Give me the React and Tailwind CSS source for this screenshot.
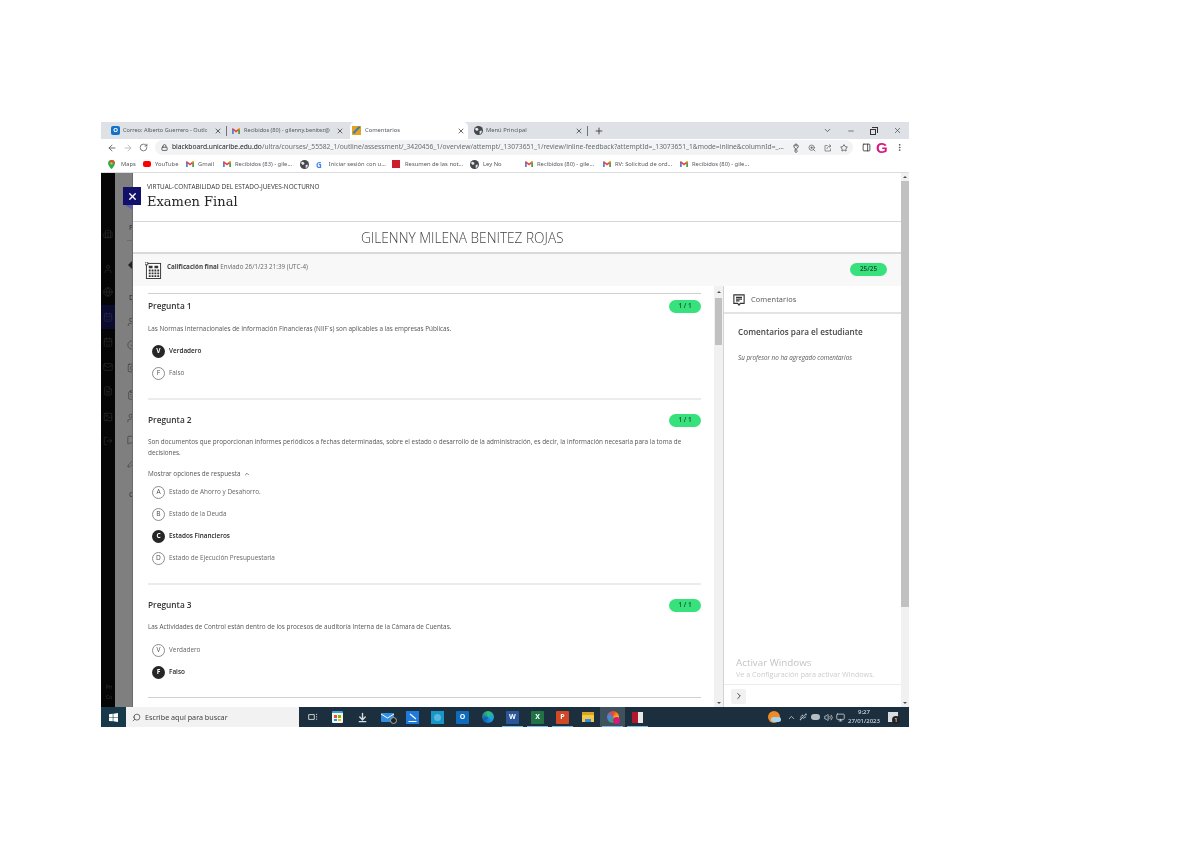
import React from "react";
import { ArrowLeft, ArrowRight, RotateCw, Lock, KeyRound, ZoomIn, Star, PanelRight, MoreVertical, X, Plus, ChevronDown, Minus, Search, ChevronRight, ChevronUp, Volume2, Monitor, Usb, ArrowDownToLine, User, Building2, Globe as LGlobe, CalendarDays, Mail, FileText, Image, LogOut, UserSearch, CircleCheck, SquarePlay, ClipboardList, UserCog, MessageSquare, Pencil } from "lucide-react";

const ui = "font-['Noto_Sans','Open_Sans',sans-serif]";
const os = "font-['Open_Sans','Noto_Sans',sans-serif]";

const GM = () => (
  <svg viewBox="0 0 16 12" className="w-[8px] h-[6px] shrink-0">
    <path d="M0 2v10h3V5l5 4 5-4v7h3V2l-1.500-2L8 5 1.500 0z" fill="#ea4335" />
    <path d="M0 2v10h3V5z" fill="#4285f4" />
    <path d="M13 5v7h3V2z" fill="#34a853" />
    <path d="M13 5l3-3-1.500-2L13 1z" fill="#fbbc04" />
  </svg>
);
const Globe = () => (
  <svg viewBox="0 0 16 16" className="w-[9px] h-[9px] shrink-0">
    <circle cx="8" cy="8" r="8" fill="#44484c" />
    <path d="M3 3l4 1 1 3-3 2-3-3zM10 9l4-1-1 5-3 1z" fill="#e8eaed" />
  </svg>
);
const Tab = ({ w, cls, ts, icon, label, active }) => (
  <div className={`${w} ${cls} h-full flex items-center gap-[3px] shrink-0 ${active ? "bg-white rounded-t-[5px]" : ""}`}>
    {icon}
    <span className={`flex-1 whitespace-nowrap ${ts} text-[#55585c]`}>{label}</span>
    <X size={8} strokeWidth={2.2} className="text-[#333] shrink-0" />
  </div>
);
const Bm = ({ w, icon, label }) => (
  <div className={`${w} flex items-center gap-[4px] shrink-0`}>
    {icon}
    {label && <span className="whitespace-nowrap text-[5.8px] text-[#55585c]">{label}</span>}
  </div>
);

const Badge = ({ children, w = "w-[32px]" }) => (
  <div className={`${w} h-[13px] rounded-full bg-[#37e27c] flex items-center justify-center text-[6.4px] font-semibold text-[#164a2e] shrink-0`}>{children}</div>
);
const Opt = ({ l, t, sel }) => (
  <div className="h-[22px] flex items-center pl-[4px] gap-[4px]">
    <div className={`w-[13px] h-[13px] rounded-full flex items-center justify-center text-[6.6px] shrink-0 ${sel ? "bg-[#262626] text-white font-bold" : "border border-[#8d8d8d] text-[#4a4a4a]"}`}>{l}</div>
    <span className={`text-[6.4px] ${sel ? "font-semibold text-[#262626]" : "text-[#666]"}`}>{t}</span>
  </div>
);
const QHead = ({ n }) => (
  <div className="h-[22px] flex items-center justify-between">
    <span className="text-[8.3px] font-semibold text-[#333]">Pregunta {n}</span>
    <Badge>1 / 1</Badge>
  </div>
);
const P = ({ children, cls = "" }) => <p className={`text-[6.37px] leading-[11px] text-[#555] ${cls}`}>{children}</p>;

const BI = ({ h, cls = "", Icon }) => (
  <div className={`${h} ${cls} flex items-center justify-center`}><Icon size={10} strokeWidth={1.6} /></div>
);
const GI = ({ cls, Icon }) => (
  <div className={`h-[12px] w-full pl-[12px] flex items-center ${cls}`}><Icon size={10} strokeWidth={1.6} className="shrink-0" /></div>
);
const GL = ({ cls, children }) => <div className={`h-[12px] w-full pl-[14px] text-[7px] font-semibold leading-[12px] ${cls}`}>{children}</div>;

const Square = ({ cls, children }) => <div className={`w-[13px] h-[13px] flex items-center justify-center text-[7px] font-bold text-white shrink-0 ${cls}`}>{children}</div>;
const TB = ({ children, on, active }) => (
  <div className={`w-[25px] h-full flex items-center justify-center shrink-0 relative ${active ? "bg-[#40515e]" : ""}`}>
    {children}
    {on && <div className="absolute bottom-0 left-[2px] right-[2px] h-[1px] bg-[#76b9ed]" />}
  </div>
);

export default function App() {
  return (
    <div className={`w-[1200px] h-[848px] bg-white overflow-hidden pt-[122px] pl-[101px] ${ui} blur-[0.3px]`}>
      <div className="w-[808px] h-[605px] flex flex-col">
        {/* tabs */}
        <div className="h-[17px] bg-[#dee1e6] flex items-end pl-[2px] shrink-0">
          <Tab w="w-[122px]" cls="pl-[8px] pr-[3px]" ts="text-[5.6px]" label="Correo: Alberto Guerrero - Outlc" icon={<div className="w-[9px] h-[9px] rounded-[2px] bg-[#1273c6] text-white text-[6px] font-bold flex items-center justify-center shrink-0">O</div>} />
          <div className="w-[1px] h-[10px] bg-[#70757a] mb-[3px] mx-[1px]" />
          <Tab w="w-[120px]" cls="pl-[4px] pr-[4px]" ts="text-[5.6px] pl-[1px]" label="Recibidos (80) - gilenny.benitez@" icon={<GM />} />
          <div className="w-[2px]" />
          <Tab w="w-[118px]" cls="pl-[2px] pr-[3px]" ts="text-[5.8px] pl-[1px]" active label="Comentarios" icon={<div className="w-[9px] h-[9px] bg-[#e6a21c] shrink-0 relative overflow-hidden"><div className="absolute inset-x-0 top-[3px] h-[2px] bg-[#2f7fc1] -rotate-45" /></div>} />
          <div className="w-[2px]" />
          <Tab w="w-[115px]" cls="pl-[4px] pr-[2px]" ts="text-[5.8px]" label="Menú Principal" icon={<Globe />} />
          <div className="w-[1px] h-[10px] bg-[#70757a] mb-[3px] mx-[2px]" />
          <div className="w-[18px] h-full flex items-center justify-center"><Plus size={10} strokeWidth={2} className="text-[#333]" /></div>
          <div className="flex-1" />
          <div className="h-full flex items-center pr-[7px] gap-[15px] text-[#444]">
            <ChevronDown size={9} />
            <Minus size={8} strokeWidth={2} />
            <div className="w-[8px] h-[8px] relative"><div className="absolute left-0 bottom-0 w-[6px] h-[6px] border border-[#333] bg-[#dee1e6]" /><div className="absolute right-0 top-0 w-[6px] h-[6px] border-t border-r border-[#333]" /></div>
            <X size={9} strokeWidth={1.8} />
          </div>
        </div>
        {/* address */}
        <div className="h-[17px] bg-white flex items-center shrink-0 text-[#555]">
          <div className="w-[54px] flex items-center pl-[6px] gap-[6px] shrink-0">
            <ArrowLeft size={10} strokeWidth={2} />
            <ArrowRight size={10} strokeWidth={2} className="text-[#b0b3b6]" />
            <RotateCw size={9} strokeWidth={2} />
          </div>
          <div className="w-[698px] h-[15px] rounded-full bg-[#f1f3f4] flex items-center pl-[6px] pr-[6px] gap-[8px] shrink-0">
            <Lock size={7} strokeWidth={3} className="text-[#555] shrink-0" />
            <span className="-ml-[4px] whitespace-nowrap text-[6.7px] text-[#6a6e72] flex-1"><span className="text-[#202124]">blackboard.unicaribe.edu.do</span>/ultra/courses/_55582_1/outline/assessment/_3420456_1/overview/attempt/_13073651_1/review/inline-feedback?attemptId=_13073651_1&amp;mode=inline&amp;columnId=_...</span>
            <KeyRound size={8} strokeWidth={2.5} className="text-[#444] shrink-0 -rotate-45" />
            <ZoomIn size={8} strokeWidth={2} className="shrink-0" />
            <svg viewBox="0 0 16 16" className="w-[8px] h-[8px] shrink-0" fill="none" stroke="#777" strokeWidth="1.600"><path d="M7 3H2v11h11V9M10 1l4 3-4 3M14 4C9 4 6 6 6 10" /></svg>
            <Star size={8} strokeWidth={2} className="text-[#333] shrink-0" />
          </div>
          <div className="flex items-center pl-[9px] gap-[5px]">
            <PanelRight size={9} strokeWidth={2} className="text-[#222]" />
            <span className="text-[15px] leading-none font-bold text-[#d9187f] font-['Liberation_Sans',sans-serif]">G</span>
            <MoreVertical size={9} strokeWidth={2.4} className="ml-[2px]" />
          </div>
        </div>
        {/* bookmarks */}
        <div className="h-[17px] bg-white border-b border-[#dadce0] flex items-center pl-[7px] shrink-0">
          <Bm w="w-[35px]" label="Maps" icon={<svg viewBox="0 0 12 16" className="w-[7px] h-[9px] shrink-0 mr-[2px]"><path d="M6 0a6 6 0 0 1 6 6c0 4-6 10-6 10S0 10 0 6a6 6 0 0 1 6-6z" fill="#34a853" /><path d="M6 0a6 6 0 0 1 6 6L2 2z" fill="#ea4335" /><circle cx="6" cy="6" r="2" fill="#fbbc04" /></svg>} />
          <Bm w="w-[43px]" label="YouTube" icon={<div className="w-[8px] h-[6px] rounded-[2px] bg-[#f00] shrink-0" />} />
          <Bm w="w-[37px]" label="Gmail" icon={<GM />} />
          <Bm w="w-[77px]" label="Recibidos (83) - gile..." icon={<GM />} />
          <Bm w="w-[16px]" icon={<Globe />} />
          <Bm w="w-[76px]" label="Iniciar sesión con u..." icon={<span className="text-[8px] font-bold text-[#4285f4] leading-[11px] mr-[3px]">G</span>} />
          <Bm w="w-[78px]" label="Resumen de las not..." icon={<div className="w-[8px] h-[8px] bg-[#cc1f2c] shrink-0 mr-[1px]" />} />
          <Bm w="w-[55px]" label="Ley No" icon={<Globe />} />
          <Bm w="w-[78px]" label="Recibidos (80) - gile..." icon={<GM />} />
          <Bm w="w-[77px]" label="RV: Solicitud de ord..." icon={<GM />} />
          <Bm w="w-[78px]" label="Recibidos (80) - gile..." icon={<GM />} />
        </div>
        {/* main */}
        <div className={`h-[534px] flex relative shrink-0 ${os}`}>
          {/* black strip */}
          <div className="w-[14px] bg-[#050505] flex flex-col shrink-0 text-[#2e2e2e]">
            <div className="h-[51px]" />
            <BI h="h-[20px]" Icon={Building2} />
            <BI h="h-[24px]" cls="mt-[13px]" Icon={User} />
            <BI h="h-[22px]" Icon={LGlobe} />
            <BI h="h-[24px]" cls="mt-[2px] bg-[#0a0a2c] text-[#2a2a50]" Icon={CalendarDays} />
            <BI h="h-[26px]" Icon={CalendarDays} />
            <BI h="h-[24px]" Icon={Mail} />
            <BI h="h-[24px]" Icon={FileText} />
            <BI h="h-[24px]" cls="mt-[2px]" Icon={Image} />
            <BI h="h-[24px]" Icon={LogOut} />
            <div className="flex-1" />
            <div className="h-[25px] text-[5px] leading-[10px] text-[#333] pl-[5px]">Pri<br />Co</div>
          </div>
          {/* gray strip */}
          <div className="w-[18px] bg-[#7f7f7f] border-r border-[#6a6a6a] shrink-0 flex flex-col text-[#3c3c3c] overflow-hidden">
            <GL cls="mt-[49px]">P</GL>
            <div className="mt-[6px] ml-[12px] h-[1px] bg-[#6c6c6c]" />
            <div className="mt-[20px] ml-[13px] w-0 h-0 border-y-[4px] border-y-transparent border-r-[4px] border-r-[#222]" />
            <GL cls="mt-[23px]">D</GL>
            <GI cls="mt-[12px]" Icon={UserSearch} />
            <GI cls="mt-[11px]" Icon={CircleCheck} />
            <GI cls="mt-[11px]" Icon={SquarePlay} />
            <GI cls="mt-[15px]" Icon={ClipboardList} />
            <GI cls="mt-[11px]" Icon={UserCog} />
            <GI cls="mt-[10px]" Icon={MessageSquare} />
            <GI cls="mt-[11px]" Icon={Pencil} />
            <GL cls="mt-[20px]">C</GL>
          </div>
          {/* white panel */}
          <div className="flex-1 flex flex-col bg-white min-w-0">
            <div className="h-[49px] border-b border-[#d6d6d6] pl-[14px] pt-[9px] shrink-0">
              <div className="text-[6.4px] leading-[9px] text-[#333]">VIRTUAL-CONTABILIDAD DEL ESTADO-JUEVES-NOCTURNO</div>
              <div className="text-[13px] leading-[20px] mt-[1px] text-[#262626] font-['DejaVu_Serif',serif]">Examen Final</div>
            </div>
            <div className="h-[32px] border-b-2 border-[#d9d9d9] pl-[228px] pt-[2px] flex items-center shrink-0">
              <span className="text-[13.65px] font-light text-[#444] whitespace-nowrap">GILENNY MILENA BENITEZ ROJAS</span>
            </div>
            <div className="h-[32px] bg-[#f8f8f8] flex items-center pl-[12px] pr-[14px] shrink-0">
              <svg viewBox="0 0 18 18" className="w-[17px] h-[17px] shrink-0 mt-[1px]">
                <rect x="1.500" y="1.500" width="15" height="16" fill="#fff" stroke="#333" strokeWidth="1" />
                <rect x="0" y="0" width="3" height="3" fill="#fff" stroke="#333" strokeWidth="0.800" />
                <path d="M4 4h4v2.500H4zM10 4h4v2.500h-4zM4 8h2v2H4zM7 8h2v2H7zM10 8h2v2h-2zM13 8h2v2h-2zM4 11h2v2H4zM7 11h2v2H7zM10 11h2v2h-2zM13 11h2v2h-2zM4 14h2v2H4zM7 14h2v2H7zM10 14h2v2h-2zM13 14h2v2h-2z" fill="#333" />
              </svg>
              <div className="ml-[5px] text-[6.25px] text-[#666] flex-1 -mt-[7px]"><span className="font-bold text-[#444]">Calificación final</span> Enviado 26/1/23 21:39 (UTC-4)</div>
              <div className="-mt-[2px]"><Badge w="w-[37px]">25/25</Badge></div>
            </div>
            <div className="flex-1 flex min-h-0">
              {/* questions */}
              <div className="w-[581px] pl-[15px] pr-[13px] overflow-hidden shrink-0">
                <div className="mt-[7px] border-t border-[#d0d0d0]">
                  <div className="h-[1px]" />
                  <QHead n={1} />
                </div>
                <P cls="mt-[6px]">Las Normas Internacionales de Información Financieras (NIIF´s) son aplicables a las empresas Públicas.</P>
                <div className="mt-[6px]"><Opt l="V" t="Verdadero" sel /><Opt l="F" t="Falso" /></div>
                <div className="mt-[14px] border-t-2 border-[#ececec] pt-[9px]"><QHead n={2} /></div>
                <P cls="mt-[5px]">Son documentos que proporcionan informes periódicos a fechas determinadas, sobre el estado o desarrollo de la administración, es decir, la información necesaria para la toma de decisiones.</P>
                <div className="mt-[11px] h-[10px] flex items-center gap-[3px] text-[6.4px] text-[#555]">Mostrar opciones de respuesta <ChevronUp size={6} strokeWidth={3} /></div>
                <div className="mt-[2px]">
                  <Opt l="A" t="Estado de Ahorro y Desahorro." />
                  <Opt l="B" t="Estado de la Deuda" />
                  <Opt l="C" t="Estados Financieros" sel />
                  <Opt l="D" t="Estado de Ejecución Presupuestaria" />
                </div>
                <div className="mt-[14px] border-t-2 border-[#ececec] pt-[9px]"><QHead n={3} /></div>
                <P cls="mt-[5px]">Las Actividades de Control están dentro de los procesos de auditoría Interna de la Cámara de Cuentas.</P>
                <div className="mt-[7px]"><Opt l="V" t="Verdadero" /><Opt l="F" t="Falso" sel /></div>
                <div className="mt-[14px] border-t border-[#d0d0d0]" />
              </div>
              {/* inner scrollbar */}
              <div className="w-[10px] bg-[#f1f1f1] border-r border-[#d4d4d4] flex flex-col items-center shrink-0">
                <div className="h-[12px] flex items-center justify-center"><div className="w-0 h-0 border-x-[2px] border-x-transparent border-b-[2px] border-b-[#505050]" /></div>
                <div className="w-[7px] h-[47px] bg-[#c1c1c1]" />
                <div className="flex-1" />
                <div className="h-[8px] flex items-center justify-center"><div className="w-0 h-0 border-x-[2px] border-x-transparent border-t-[2px] border-t-[#505050]" /></div>
              </div>
              {/* comments */}
              <div className="flex-1 flex flex-col min-w-0">
                <div className="h-[28px] border-b-2 border-[#e3e3e3] flex items-center pl-[9px] pt-[2px] gap-[6px] shrink-0">
                  <svg viewBox="0 0 14 14" className="w-[12px] h-[12px] shrink-0" fill="none" stroke="#333" strokeWidth="1.300"><path d="M1 1h12v10H8.500L7 13l-1.500-2H1z" /><path d="M3.500 4h7M3.500 6h7M3.500 8h4" /></svg>
                  <span className="text-[7.4px] text-[#555] tracking-[0.1px]">Comentarios</span>
                </div>
                <div className="pl-[14px] pt-[11px] flex-1 flex flex-col min-h-0">
                  <div className="text-[8.2px] leading-[14px] font-semibold text-[#444]">Comentarios para el estudiante</div>
                  <div className="mt-[14px] text-[6.3px] leading-[10px] italic text-[#555]">Su profesor no ha agregado comentarios</div>
                  <div className="flex-1" />
                  <div className="-ml-[2px] text-[9.8px] leading-[12px] text-[#c4c4c4]">Activar Windows</div>
                  <div className="-ml-[2px] text-[7.2px] leading-[11px] text-[#cdcdcd] whitespace-nowrap mb-[4px]">Ve a Configuración para activar Windows.</div>
                </div>
                <div className="h-[23px] border-t border-[#ececec] flex items-center pl-[7px] shrink-0">
                  <div className="w-[15px] h-[15px] rounded-[2px] bg-[#f1f1f1] flex items-center justify-center"><ChevronRight size={10} strokeWidth={2} className="text-[#222]" /></div>
                </div>
              </div>
            </div>
          </div>
          {/* outer scrollbar */}
          <div className="w-[8px] bg-[#f1f1f1] shrink-0 flex flex-col items-center">
            <div className="h-[8px] flex items-center justify-center"><div className="w-0 h-0 border-x-[2px] border-x-transparent border-b-[2px] border-b-[#505050]" /></div>
            <div className="w-[8px] h-[426px] bg-[#c1c1c1]" />
            <div className="flex-1" />
            <div className="h-[8px] flex items-center justify-center"><div className="w-0 h-0 border-x-[2px] border-x-transparent border-t-[2px] border-t-[#505050]" /></div>
          </div>
          {/* close overlay */}
          <div className="absolute left-[22px] top-[14px] w-[18px] h-[18px] bg-[#11116a] flex items-center justify-center"><X size={11} strokeWidth={3} className="text-white" /></div>
          <div className="absolute left-[24px] top-[32px] w-0 h-0 border-l-[8px] border-l-transparent border-t-[5px] border-t-[#5c5ca8]" />
        </div>
        {/* taskbar */}
        <div className="h-[20px] bg-[#1b2f3f] flex items-stretch shrink-0">
          <div className="w-[25px] flex items-center justify-center shrink-0 bg-[#17394a]">
            <svg viewBox="0 0 12 12" className="w-[9px] h-[9px]" fill="#fff"><path d="M0 1.500L5 1v4.500H0zM5.800 .9L12 0v5.500H5.800zM0 6.300h5v4.700L0 10.500zM5.800 6.300H12V12l-6.200-.9z" /></svg>
          </div>
          <div className="w-[173px] bg-[#f2f2f2] flex items-center pl-[6px] gap-[4px] shrink-0">
            <Search size={9} strokeWidth={2} className="text-[#444] -scale-x-100" />
            <span className="text-[7.2px] text-[#444] whitespace-nowrap">Escribe aquí para buscar</span>
          </div>
          <div className="flex items-stretch pl-[1px]">
            <TB>
              <svg viewBox="0 0 12 10" className="w-[10px] h-[8px]" fill="none" stroke="#cfd6da" strokeWidth="1.200"><path d="M.6 2h7v6h-7z" /><path d="M10.500 1v1.500M10.500 4v1.500M10.500 7v1.500" /></svg>
            </TB>
            <TB>
              <div className="w-[11px] h-[12px] rounded-[1px] bg-[#f5f5f5] border-t-[2px] border-[#3aa0d8] grid grid-cols-2 gap-[1px] p-[2px]"><div className="bg-[#f25022]" /><div className="bg-[#7fba00]" /><div className="bg-[#00a4ef]" /><div className="bg-[#ffb900]" /></div>
            </TB>
            <TB><ArrowDownToLine size={11} strokeWidth={3} className="text-[#d9dee2]" /></TB>
            <TB>
              <div className="w-[13px] h-[9px] bg-[#2f8fe0] rounded-[1px] relative overflow-visible">
                <svg viewBox="0 0 13 9" className="absolute inset-0 w-[13px] h-[9px]" fill="none" stroke="#fff" strokeWidth="1"><path d="M0 1l6.500 4L13 1" /></svg>
                <div className="absolute -right-[3px] -bottom-[2px] w-[7px] h-[7px] rounded-full bg-[#222] border border-[#aaa]" />
              </div>
            </TB>
            <TB>
              <Square cls="bg-[#1f7ae0]"><svg viewBox="0 0 13 13" className="w-[13px] h-[13px]" fill="none" stroke="#fff" strokeWidth="1.200"><path d="M4 3l6 5M2.500 10.500h8" /></svg></Square>
            </TB>
            <TB><Square cls="bg-[#1797c9]"><div className="w-[7px] h-[7px] rounded-full bg-[#56b8de]" /></Square></TB>
            <TB><Square cls="bg-[#0f6cbd] rounded-[1px]">O</Square></TB>
            <TB><div className="w-[12px] h-[12px] rounded-full bg-[conic-gradient(#35c16f,#1b9de2,#0f5fb8,#35c16f)]" /></TB>
            <TB on><Square cls="bg-[#2b579a] rounded-[1px]">W</Square></TB>
            <TB on><Square cls="bg-[#217346] rounded-[1px]">X</Square></TB>
            <TB on><Square cls="bg-[#d24726] rounded-[1px]">P</Square></TB>
            <TB><div className="w-[12px] h-[10px] bg-[#f2c94c] border-t-[3px] border-[#d9a520] flex justify-center items-end"><div className="w-[6px] h-[3px] bg-[#2f8fe0]" /></div></TB>
            <TB on active><div className="w-[12px] h-[12px] rounded-full bg-[conic-gradient(#ea4335,#fbbc04,#34a853,#4285f4,#ea4335)] relative"><div className="absolute -right-[1px] -bottom-[1px] w-[7px] h-[7px] rounded-full bg-[#d9187f]" /></div></TB>
            <TB on><div className="w-[11px] h-[11px] bg-[#e8e8e8] relative"><div className="absolute left-0 top-0 w-[6px] h-[11px] bg-[#b3172c]" /></div></TB>
          </div>
          <div className="flex-1" />
          <div className="flex items-center gap-[3px] pr-[11px] text-[#d8dde0]">
            <div className="w-[12px] h-[12px] rounded-full bg-[#f08a24] relative mr-[4px]"><div className="absolute left-[3px] bottom-[1px] w-[10px] h-[5px] rounded-full bg-[#a9d4f0]" /></div>
            <ChevronUp size={9} strokeWidth={2} />
            <Usb size={8} />
            <div className="w-[9px] h-[6px] rounded-full bg-[#b5bec4] ml-[1px] mr-[1px]" />
            <Volume2 size={9} />
            <Monitor size={9} />
            <div className="w-[32px] text-center text-[6px] leading-[9px] text-[#e6e9eb] whitespace-nowrap font-['Noto_Sans',sans-serif]">9:27<br />27/01/2023</div>
            <div className="w-[10px] h-[10px] bg-[#d8dde0] relative ml-[5px]"><div className="absolute -right-[2px] -bottom-[2px] w-[8px] h-[8px] rounded-full bg-[#222] text-white text-[6px] leading-[8px] text-center">1</div></div>
          </div>
        </div>
      </div>
    </div>
  );
}
